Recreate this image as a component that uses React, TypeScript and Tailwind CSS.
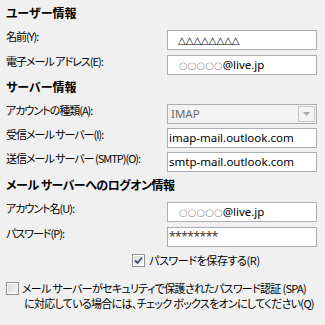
import React from 'react';

const jp = "font-['Meiryo_UI','Noto_Sans_CJK_JP',sans-serif] [font-feature-settings:'palt']";
const latin = "font-['Noto_Sans','Open_Sans',sans-serif]";
const labelCls = `w-[161px] text-[11px] leading-[14px] -mt-[1px] tracking-[-1px] whitespace-nowrap ${jp}`;

interface RowProps {
  label: string;
  className: string;
  children: React.ReactNode;
}

const Row: React.FC<RowProps> = ({ label, className, children }) => (
  <div className={`flex items-start h-[20px] ${className}`}>
    <div className={labelCls}>{label}</div>
    <div className="w-[150px] h-[20px] border border-[#abadb3] bg-white flex items-center overflow-hidden">
      {children}
    </div>
  </div>
);

const Header: React.FC<{ text: string; className: string }> = ({ text, className }) => (
  <div className={`h-[16px] leading-[16px] text-[12px] font-bold whitespace-nowrap ${jp} ${className}`}>{text}</div>
);

const CheckBox: React.FC<{ checked?: boolean }> = ({ checked }) => (
  <div className="w-[13px] h-[13px] shrink-0 border border-[#8f8f8f] bg-white p-[1px]">
    <div className="w-full h-full bg-gradient-to-br from-[#dcdcdc] to-[#f6f6f6] flex items-center justify-center">
      {checked && (
        <svg width="9" height="9" viewBox="0 0 9 9">
          <path d="M1 4.5 L3.5 7 L8 1.5" fill="none" stroke="#3c4f78" strokeWidth="1.8" />
        </svg>
      )}
    </div>
  </div>
);

const MaskedMail: React.FC = () => (
  <span className="pl-[11px] flex items-center">
    <span className="font-['DejaVu_Sans',sans-serif] text-[10px] text-[#9a9a9a]">○○○○○</span>
    <span className={`text-[11.5px] ${latin}`}>@live.jp</span>
  </span>
);

export default function App() {
  return (
    <div className="w-[325px] h-[325px] bg-[#f0f0f0] pl-[6px] text-black overflow-hidden">
      <div className="pt-[5px]" />
      <Header text="ユーザー情報" className="" />
      <Row label="名前(Y):" className="mt-[9px]">
        <span className="pl-[10px] font-['DejaVu_Sans',sans-serif] text-[10px] text-black">△△△△△△△△</span>
      </Row>
      <Row label="電子メール アドレス(E):" className="mt-[5px]">
        <MaskedMail />
      </Row>
      <Header text="サーバー情報" className="mt-[4px]" />
      <div className="flex items-start h-[20px] mt-[9px]">
        <div className={labelCls}>アカウントの種類(A):</div>
        <div className="w-[150px] h-[20px] border border-[#adadad] bg-[#f3f3f3] flex items-center justify-between">
          <span className={`pl-[3px] text-[11.5px] text-[#6d6d6d] ${latin}`}>IMAP</span>
          <div className="w-[17px] h-[16px] mr-[1px] border border-[#c9c9c9] flex items-center justify-center">
            <svg width="7" height="4" viewBox="0 0 7 4">
              <path d="M0 0 H7 L3.5 4 Z" fill="#a6a6a6" />
            </svg>
          </div>
        </div>
      </div>
      <Row label="受信メール サーバー(I):" className="mt-[4px]">
        <span className={`pl-[1px] text-[11.5px] ${latin}`}>imap-mail.outlook.com</span>
      </Row>
      <Row label="送信メール サーバー (SMTP)(O):" className="mt-[4px]">
        <span className={`pl-[1px] text-[11.5px] ${latin}`}>smtp-mail.outlook.com</span>
      </Row>
      <Header text="メール サーバーへのログオン情報" className="mt-[5px] tracking-[-0.5px]" />
      <Row label="アカウント名(U):" className="mt-[9px]">
        <MaskedMail />
      </Row>
      <Row label="パスワード(P):" className="mt-[5px]">
        <span className={`pl-[1px] text-[12px] leading-[12px] tracking-[-0.5px] text-[#4a3a2a] ${latin}`}>********</span>
      </Row>
      <div className="flex items-center gap-[4px] pl-[126px] mt-[5px] h-[16px]">
        <CheckBox checked />
        <span className={`text-[11px] leading-[14px] tracking-[-0.4px] whitespace-nowrap ${jp}`}>パスワードを保存する(R)</span>
      </div>
      <div className="flex items-start gap-[3px] mt-[13px]">
        <div className="mt-[1px]">
          <CheckBox />
        </div>
        <div className={`text-[11px] leading-[15px] tracking-[-0.7px] whitespace-nowrap ${jp}`}>
          メール サーバーがセキュリティで保護されたパスワード認証 (SPA)
          <br />
          <span className="pl-[2px]">に対応している場合には、チェック ボックスをオンにしてください(Q)</span>
        </div>
      </div>
    </div>
  );
}
